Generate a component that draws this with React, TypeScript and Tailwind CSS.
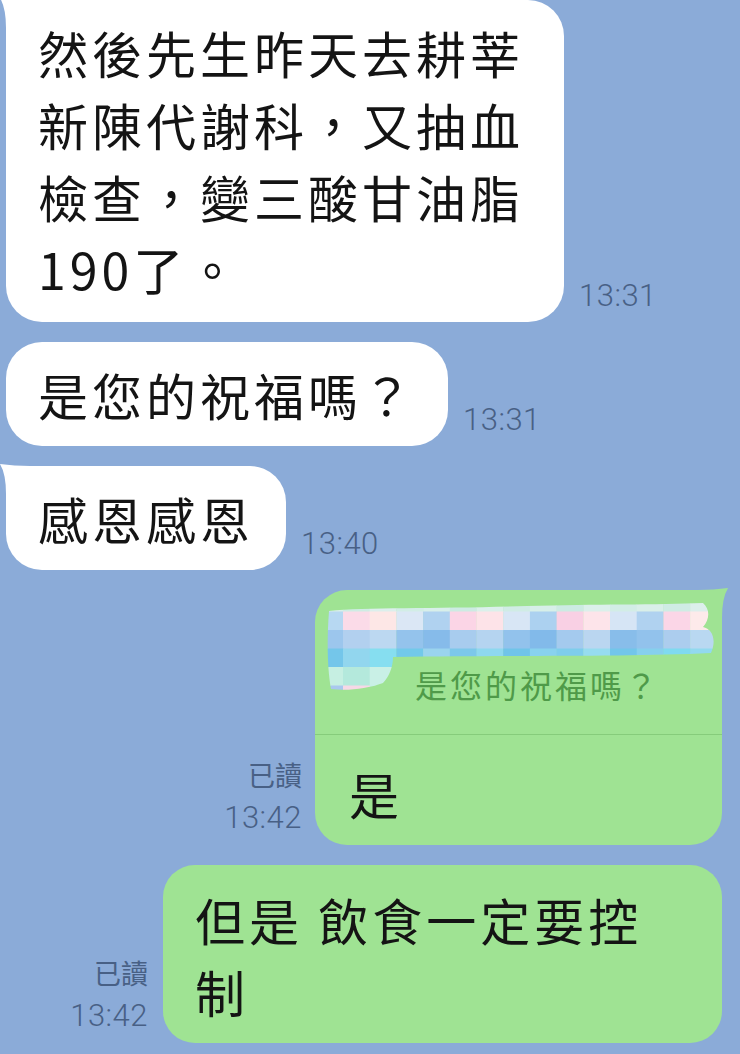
import React from 'react'

const FONT = "font-['Noto_Sans_CJK_TC','Noto_Sans_CJK_JP',sans-serif]"
const MSG = `${FONT} text-[50px] leading-[72px] tracking-[4px] text-[#141414] whitespace-nowrap`
const META = "font-['Roboto','Noto_Sans_CJK_TC',sans-serif] font-light text-[#486085] tracking-[0.5px]"

// redaction mosaic over the quoted sender's avatar and name
const mosaic: string[][] = [
  ['#d9efe9', '#cfece4', '#dcefec', '#d2ede6', '#d8efea', '#cdebe3', '#dbf0eb', '#d0ece5', '#d7efe9', '#ccebe3', '#dbf0eb', '#d2ede6', '#d9efe9', '#cfece4', '#dcefec', '#d2ede6'],
  ['#b7d8f2', '#fbdbe8', '#fde7e6', '#dbe7f5', '#b0d2f0', '#fbd5e6', '#fde3e8', '#d8e6f5', '#acd1f0', '#f9d0e4', '#fde4ea', '#d6e5f5', '#b0d2f0', '#fbd6e7', '#fdeaea', '#f4e6ee'],
  ['#9cc6ed', '#b2d0ef', '#bcd8f1', '#94c3ec', '#86bbea', '#a8ccee', '#b5d4f0', '#92c2ec', '#82baea', '#a4caee', '#bad6f0', '#88bdea', '#92c2ec', '#accdee', '#b9d8f1', '#a4caee'],
  ['#74c6ea', '#92d6ee', '#86def0', '#72c9ea', '#9ad4ee', '#7cc8ea', '#8ed8ef', '#70c4e9', '#88d2ee', '#7ecdec', '#96dcef', '#72c6ea', '#86d0ed', '#7fdaf0', '#92d9ef', '#80e0f2'],
  ['#c6efe2', '#b4e9dc', '#c9f0e6', '#bfeee0', '#b8e8da', '#c4eee4', '#bdeee2', '#c8f0e4', '#b6eadc', '#c2eee2', '#bdebe0', '#c8f0e6', '#b8ecde', '#c4eee2', '#c0ece0', '#c8f0e6'],
  ['#a9c8ee', '#f6d8e6', '#c6f0e6', '#d0f2e8', '#c4efe4', '#d2f4ea', '#c6f0e6', '#d0f2e8', '#c4efe4', '#d2f4ea', '#c6f0e6', '#d0f2e8', '#c4efe4', '#d2f4ea', '#c6f0e6', '#d0f2e8'],
]

function Mosaic() {
  return (
    <svg width="392" height="92" viewBox="0 0 392 92" className="absolute left-[12px] top-[13px]">
      <defs>
        <clipPath id="blob">
          <path d="M2 8 C40 4 120 6 200 3 C270 1 330 2 376 0 C383 6 383 16 376 24 C385 26 390 36 384 50 C300 54 200 52 66 54 C66 64 62 74 56 80 C40 86 20 88 4 86 C0 64 0 34 2 8 Z" />
        </clipPath>
      </defs>
      <g clipPath="url(#blob)">
        {mosaic.map((row, r) =>
          row.map((c, i) => (
            <rect key={`${r}-${i}`} x={-10.7 + i * 26.7} y={-10 + r * 18.5} width="27" height="19" fill={c} />
          )),
        )}
      </g>
    </svg>
  )
}

function LeftTail() {
  return (
    <svg width="30" height="30" viewBox="0 0 30 30" className="absolute -left-[6px] -top-[2px]">
      <path d="M0 0 Q14 2 30 2 L30 30 L6 30 Q6 10 0 0 Z" fill="#ffffff" />
    </svg>
  )
}

function RightTail({ color }: { color: string }) {
  return (
    <svg width="30" height="30" viewBox="0 0 30 30" className="absolute -right-[6px] -top-[2px]">
      <path d="M30 0 Q16 2 0 2 L0 30 L24 30 Q24 10 30 0 Z" fill={color} />
    </svg>
  )
}

function Incoming({
  lines,
  time,
  tail,
  className = 'py-[16px]',
}: {
  lines: string[]
  time: string
  tail?: boolean
  className?: string
}) {
  return (
    <div className="flex items-end gap-[15px] pl-[6px]">
      <div className={`relative bg-white rounded-[36px] px-[32px] ${tail ? 'rounded-tl-none' : ''} ${className}`}>
        {tail && <LeftTail />}
        <div className={MSG}>
          {lines.map((l) => (
            <div key={l}>{l}</div>
          ))}
        </div>
      </div>
      <span className={`${META} text-[31px] leading-[32px] pb-[10px]`}>{time}</span>
    </div>
  )
}

function ReadMark({ time }: { time: string }) {
  return (
    <div className="flex flex-col items-end gap-[10px] pb-[11px]">
      <span className={`${FONT} text-[27px] leading-[34px] text-[#486085]`}>已讀</span>
      <span className={`${META} text-[31px] leading-[32px]`}>{time}</span>
    </div>
  )
}

export default function App() {
  const green = '#9fe393'
  return (
    <div className="w-[740px] h-[1054px] overflow-hidden bg-[#8babd8] flex flex-col gap-[20px]">
      <Incoming
        tail
        className="w-[558px] pt-[16px] pb-[18px]"
        lines={['然後先生昨天去耕莘', '新陳代謝科，又抽血', '檢查，變三酸甘油脂', '190了。']}
        time="13:31"
      />
      <Incoming lines={['是您的祝福嗎？']} time="13:31" />
      <Incoming tail lines={['感恩感恩']} time="13:40" />

      <div className="flex items-end justify-end gap-[13px] pr-[18px]">
        <ReadMark time="13:42" />
        <div className="relative w-[407px] bg-[#9fe393] rounded-[32px] rounded-tr-none">
          <RightTail color={green} />
          <div className="relative h-[145px] border-b border-[#86cc7b]">
            <Mosaic />
            <div
              className={`${FONT} absolute left-[100px] top-[75px] text-[32px] leading-[38px] tracking-[3px] text-[#4f9a49] whitespace-nowrap`}
            >
              是您的祝福嗎？
            </div>
          </div>
          <div className={`${MSG} pl-[34px] pt-[22px] pb-[16px]`}>是</div>
        </div>
      </div>

      <div className="flex items-end justify-end gap-[15px] pr-[18px]">
        <ReadMark time="13:42" />
        <div className="w-[559px] bg-[#9fe393] rounded-[32px] pl-[32px] pt-[18px] pb-[16px]">
          <div className={MSG}>
            <div>但是 飲食一定要控</div>
            <div>制</div>
          </div>
        </div>
      </div>
    </div>
  )
}
